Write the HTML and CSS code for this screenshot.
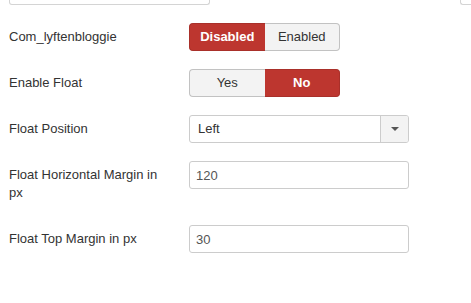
FILE: index.html
```html
<!DOCTYPE html>
<html lang="en">
<head>
  <meta charset="UTF-8">
  <title>Options</title>
  <link rel="stylesheet" href="styles.css">
</head>
<body>
  <div class="prev">
    <div class="prev-box"></div>
    <div class="prev-box-right"></div>
  </div>

  <div class="form">
    <div class="control-group">
      <label class="control-label">Com_lyftenbloggie</label>
      <div class="controls">
        <div class="btn-group">
          <span class="btn btn-danger">Disabled</span>
          <span class="btn">Enabled</span>
        </div>
      </div>
    </div>

    <div class="control-group">
      <label class="control-label">Enable Float</label>
      <div class="controls">
        <div class="btn-group">
          <span class="btn">Yes</span>
          <span class="btn btn-danger">No</span>
        </div>
      </div>
    </div>

    <div class="control-group">
      <label class="control-label">Float Position</label>
      <div class="controls">
        <div class="select">
          <span class="select-text">Left</span>
          <span class="select-arrow"><span class="caret"></span></span>
        </div>
      </div>
    </div>

    <div class="control-group tall">
      <label class="control-label">Float Horizontal Margin in px</label>
      <div class="controls">
        <input class="inputs" type="text" value="120">
      </div>
    </div>

    <div class="control-group">
      <label class="control-label">Float Top Margin in px</label>
      <div class="controls">
        <input class="inputs" type="text" value="30">
      </div>
    </div>
  </div>
</body>
</html>
```

FILE: styles.css
```css
/* Base */
* {
  box-sizing: border-box;
}

body {
  margin: 0;
  font-family: "Liberation Sans", Arial, sans-serif;
  font-size: 13px;
  line-height: 18px;
  color: #333;
  background-color: #fff;
}

/* Bottom edge of the fields above */
.prev {
  display: flex;
  height: 5px;
}

.prev-box {
  margin-left: 9px;
  width: 201px;
  border: 1px solid #d4d4d4;
  border-top: none;
  border-radius: 0 0 3px 3px;
}

.prev-box-right {
  margin-left: auto;
  width: 11px;
  border: 1px solid #d4d4d4;
  border-top: none;
  border-right: none;
  border-radius: 0 0 0 3px;
}

/* Form rows */
.form {
  padding: 18px 9px 0;
}

.control-group {
  display: grid;
  grid-template-columns: 160px 1fr;
  column-gap: 20px;
  margin-bottom: 18px;
}

.control-group.tall {
  margin-bottom: 23px;
}

.control-label {
  padding-top: 5px;
}

/* Toggle buttons */
.btn-group {
  display: flex;
  width: 151px;
  height: 28px;
}

.btn {
  flex: 1 1 0;
  display: flex;
  align-items: center;
  justify-content: center;
  background-color: #f3f3f3;
  border: 1px solid #c2c2c2;
  color: #333;
}

.btn:first-child {
  border-radius: 4px 0 0 4px;
  border-right: none;
}

.btn:last-child {
  border-radius: 0 4px 4px 0;
  border-left: none;
}

.btn-danger {
  background-color: #bd362f;
  border-color: #a9302a;
  color: #fff;
  font-weight: bold;
}

/* Select */
.select {
  display: flex;
  width: 220px;
  height: 28px;
  border: 1px solid #ccc;
  border-radius: 3px;
  overflow: hidden;
}

.select-text {
  flex: 1;
  padding: 4px 8px;
}

.select-arrow {
  width: 28px;
  display: flex;
  align-items: center;
  justify-content: center;
  background-color: #f3f3f3;
  border-left: 1px solid #ccc;
}

.caret {
  width: 0;
  height: 0;
  border-left: 4px solid transparent;
  border-right: 4px solid transparent;
  border-top: 4px solid #555;
}

/* Text inputs */
.inputs {
  display: block;
  width: 220px;
  height: 28px;
  padding: 4px 6px;
  margin: 0;
  border: 1px solid #ccc;
  border-radius: 3px;
  font-family: inherit;
  font-size: 13px;
  color: #555;
  background-color: #fff;
}
```
